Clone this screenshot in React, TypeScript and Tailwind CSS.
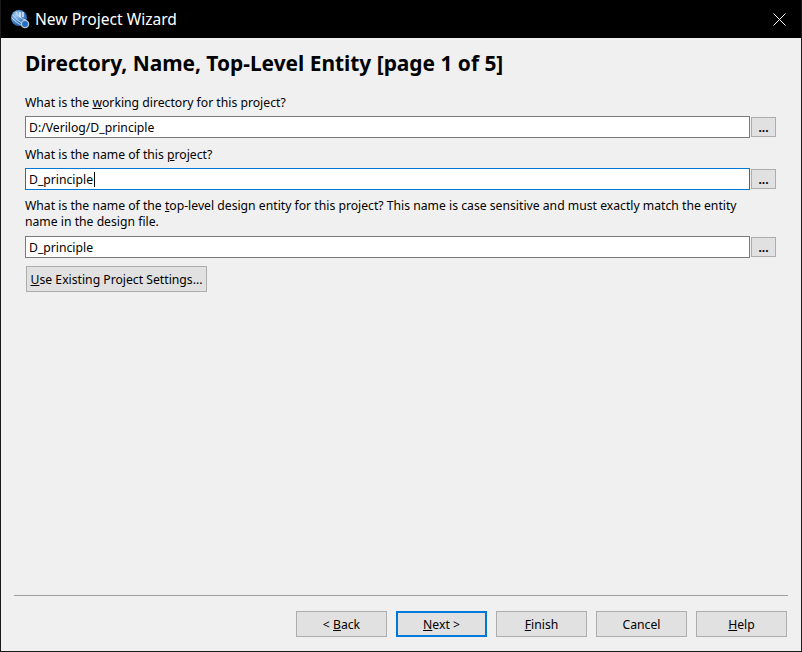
const font = "font-['Noto_Sans','Liberation_Sans',sans-serif]";

function Globe() {
  return (
    <svg width="20" height="20" viewBox="0 0 20 20">
      <defs>
        <radialGradient id="g" cx="0.35" cy="0.3" r="0.8">
          <stop offset="0" stopColor="#a9cdf0" />
          <stop offset="0.6" stopColor="#3f82c8" />
          <stop offset="1" stopColor="#1d4f8c" />
        </radialGradient>
      </defs>
      <circle cx="9" cy="9" r="8" fill="url(#g)" />
      <path d="M3 6c3 4 6 7 11 9M2 9c3 3 5 5 9 7M6 3c2 4 5 7 10 8" stroke="#d6e6f5" strokeWidth="0.8" fill="none" />
      <path d="M10 3v5M13 3v5" stroke="#fff" strokeWidth="1.2" />
      <circle cx="15" cy="15" r="3.6" fill="#1f6fc4" stroke="#b9c4cf" strokeWidth="1.4" />
    </svg>
  );
}

function Field({ value, focused }: { value: string; focused?: boolean }) {
  return (
    <div className="flex h-[22px] items-center gap-[1px]">
      <div
        className={
          "flex h-[22px] w-[725px] items-center bg-white pl-[3px] pt-[2px] text-[12.2px] text-black border " +
          (focused ? "border-[#0078d7]" : "border-[#7a7a7a]")
        }
      >
        {value}
        {focused && <span className="ml-[1px] -mt-[2px] h-[15px] w-px bg-black" />}
      </div>
      <button className="flex h-[20px] w-[25px] items-end justify-center border border-[#adadad] bg-[#e1e1e1] pb-[1px] text-[12px] font-bold leading-[14px] text-black">
        ...
      </button>
    </div>
  );
}

function WizardButton({ children, active }: { children: React.ReactNode; active?: boolean }) {
  return (
    <button
      className={
        "flex h-[26px] w-[91px] items-center justify-center bg-[#e1e1e1] pt-[2px] text-[12.2px] text-black " +
        (active ? "border-2 border-[#0078d7]" : "border border-[#adadad]")
      }
    >
      <span>{children}</span>
    </button>
  );
}

export default function App() {
  return (
    <div className={"flex h-[652px] w-[802px] flex-col overflow-hidden border-x border-b border-[#1a1a1a] bg-[#f0f0f0] " + font}>
      {/* title bar */}
      <div className="flex h-[38px] shrink-0 items-center bg-black pl-[9px] pr-[15px] text-white">
        <Globe />
        <span className="ml-[5px] pt-[2px] text-[15.6px]">New Project Wizard</span>
        <svg className="ml-auto" width="13" height="13" viewBox="0 0 13 13">
          <path d="M0.5 0.5l12 12M12.5 0.5l-12 12" stroke="#fff" strokeWidth="1" />
        </svg>
      </div>

      <div className="flex flex-1 flex-col pl-[24px] pr-[25px] text-[12.2px] text-black">
        <h1 className="mt-[11px] h-[28px] text-[20.9px] font-bold leading-[28px]">
          Directory, Name, Top-Level Entity [page 1 of 5]
        </h1>
        <p className="mt-[17px] h-[22px] leading-[18px]">
          What is the <u>w</u>orking directory for this project?
        </p>
        <Field value="D:/Verilog/D_principle" />
        <p className="mt-[8px] h-[22px] leading-[18px]">
          What is the name of this <u>p</u>roject?
        </p>
        <Field value="D_principle" focused />
        <p className="mt-[8px] h-[38px] w-[725px] leading-[16px]">
          What is the name of the <u>t</u>op-level design entity for this project? This name is case sensitive and must exactly match the entity name in the design file.
        </p>
        <Field value="D_principle" />
        <button className="ml-[1px] mt-[8px] flex h-[26px] w-[181px] items-center justify-center border border-[#adadad] bg-[#e1e1e1] pt-[2px] text-[12.2px] text-black">
          <span>
            <u>U</u>se Existing Project Settings...
          </span>
        </button>
      </div>

      {/* footer */}
      <div className="mx-[13px] h-px bg-[#a0a0a0]" />
      <div className="flex justify-end gap-[9px] pb-[14px] pr-[14px] pt-[15px]">
        <WizardButton>
          &lt; <u>B</u>ack
        </WizardButton>
        <WizardButton active>
          <u>N</u>ext &gt;
        </WizardButton>
        <WizardButton>
          <u>F</u>inish
        </WizardButton>
        <WizardButton>Cancel</WizardButton>
        <WizardButton>
          <u>H</u>elp
        </WizardButton>
      </div>
    </div>
  );
}
